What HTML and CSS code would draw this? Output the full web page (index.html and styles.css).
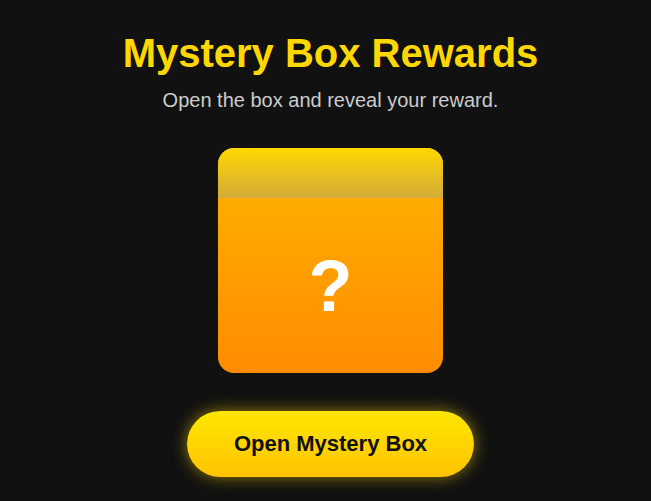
FILE: index.html
```html
<!DOCTYPE html>
<html>
<head>
<meta charset="utf-8">
<link rel="stylesheet" href="styles.css">
</head>
<body>
<main class="page">
  <h1 class="title">Mystery Box Rewards</h1>
  <p class="subtitle">Open the box and reveal your reward.</p>
  <div class="box">
    <div class="lid"></div>
    <div class="body"><span class="mark">?</span></div>
  </div>
  <button class="open-btn">Open Mystery Box</button>
</main>
</body>
</html>
```
FILE: styles.css
```css
html, body {
  margin: 0;
  padding: 0;
  background: #111111;
  height: 100%;
  overflow: hidden;
}
.page {
  display: flex;
  flex-direction: column;
  align-items: center;
  font-family: "Liberation Sans", Arial, sans-serif;
  padding: 30px 0 0 10px;
}
.title {
  margin: 0;
  color: #ffd700;
  font-size: 40px;
  font-weight: bold;
  line-height: 46px;
}
.subtitle {
  margin: 12px 0 0;
  color: #cccccc;
  font-size: 20px;
  line-height: 24px;
}
.box {
  margin-top: 36px;
  width: 225px;
  height: 225px;
  border-radius: 16px;
  overflow: hidden;
  display: flex;
  flex-direction: column;
  background: linear-gradient(180deg, #ffb400 0%, #ff8c00 100%);
}
.lid {
  height: 50px;
  background: linear-gradient(180deg, #ffd700 0%, #d4ab3a 100%);
}
.body {
  flex: 1;
  display: flex;
  align-items: center;
  justify-content: center;
}
.mark {
  color: #ffffff;
  font-size: 72px;
  font-weight: bold;
  line-height: 1;
}
.open-btn {
  margin-top: 38px;
  width: 287px;
  height: 66px;
  border: none;
  border-radius: 33px;
  background: linear-gradient(180deg, #ffe600 0%, #ffc400 100%);
  box-shadow: 0 0 16px rgba(255, 215, 0, 0.55);
  color: #111111;
  font-family: "Liberation Sans", Arial, sans-serif;
  font-size: 22px;
  font-weight: bold;
  cursor: pointer;
}
```
